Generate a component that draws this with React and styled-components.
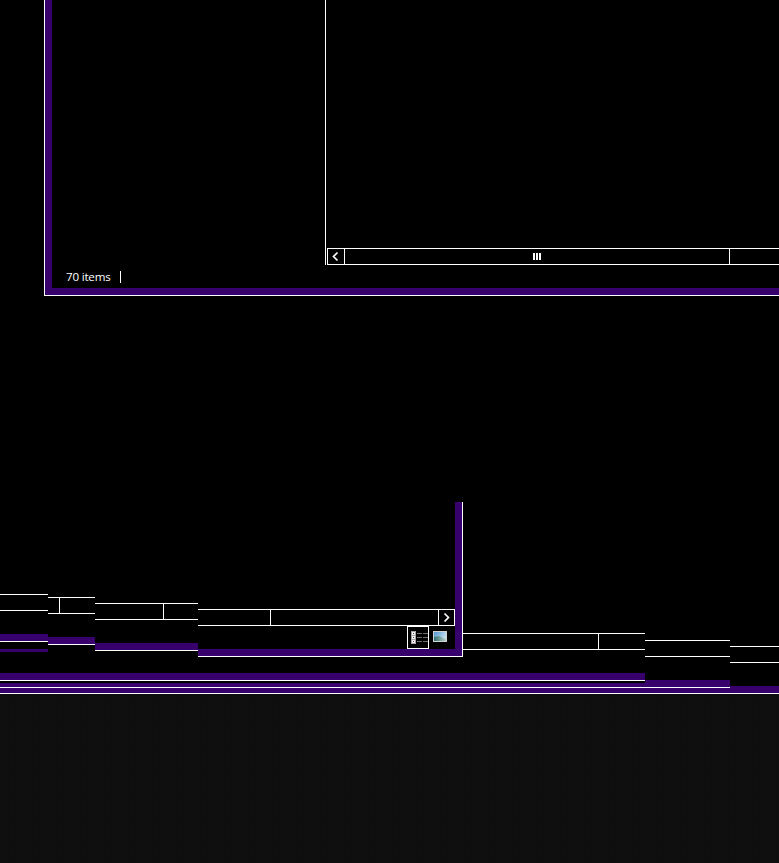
import styled, { createGlobalStyle } from "styled-components";

const purple = "#37006c";

const GlobalStyle = createGlobalStyle`
  html, body {
    margin: 0;
    padding: 0;
    background: #000;
  }
  body {
    font-family: "Open Sans", "Liberation Sans", sans-serif;
    color: #fff;
  }
`;

const Page = styled.div`
  width: 779px;
  height: 863px;
  overflow: hidden;
  display: flex;
  flex-direction: column;
  background: #000;
`;

//Top explorer window
const Window = styled.div`
  height: 296px;
  flex: none;
  margin-left: 44px;
  border-left: 1px solid #fff;
  border-bottom: 1px solid #fff;
  box-sizing: border-box;
`;

const WindowFrame = styled.div`
  height: 100%;
  box-sizing: border-box;
  border-left: 7px solid ${purple};
  border-bottom: 7px solid ${purple};
  display: flex;
  flex-direction: column;
`;

const Panes = styled.div`
  height: 265px;
  flex: none;
  display: flex;
`;

const NavPane = styled.div`
  width: 273px;
  flex: none;
`;

const ContentPane = styled.div`
  flex: 1;
  min-width: 0;
  border-left: 1px solid #fff;
  padding-left: 1px;
  display: flex;
  flex-direction: column;
  justify-content: flex-end;
`;

const StatusBar = styled.div`
  flex: 1;
  display: flex;
  align-items: center;
  padding-left: 14px;
`;

const ItemCount = styled.span`
  font-size: 11.6px;
  letter-spacing: -0.2px;
  line-height: 16px;
  width: 54px;
`;

const StatusDivider = styled.span`
  width: 1px;
  height: 12px;
  background: #fff;
`;

//Scroll bars
const Track = styled.div`
  height: 17px;
  box-sizing: border-box;
  flex: none;
  display: flex;
  border-top: 1px solid #fff;
  border-bottom: 1px solid #fff;
`;

const TrackCell = styled.div`
  width: ${(p) => p.$width}px;
  flex: none;
  box-sizing: border-box;
  border-right: 1px solid #fff;
`;

const Thumb = styled(TrackCell)`
  display: flex;
  align-items: center;
  justify-content: center;
  gap: 1px;
`;

const GripBar = styled.span`
  width: 2px;
  height: 7px;
  background: #fff;
`;

const TrackFill = styled.div`
  flex: 1;
`;

const ArrowButton = styled.div`
  width: ${(p) => p.$width}px;
  flex: none;
  box-sizing: border-box;
  border-left: 1px solid #fff;
  border-right: 1px solid #fff;
  display: flex;
  align-items: center;
  justify-content: center;
`;

//Torn lower part of the screen
const Stage = styled.div`
  height: 398px;
  flex: none;
  display: flex;
`;

const Column = styled.div`
  width: ${(p) => p.$width}px;
  flex: none;
  display: flex;
  flex-direction: column;
  padding-top: ${(p) => p.$top}px;
  box-sizing: border-box;
`;

const Edge = styled.div`
  height: ${(p) => p.$size}px;
  flex: none;
  box-sizing: border-box;
  margin-top: ${(p) => p.$gap || 0}px;
  background: ${purple};
  border-bottom: ${(p) => (p.$open ? "none" : "1px solid #fff")};
`;

const Bands = styled.div`
  margin-top: auto;
`;

const DockedPanel = styled.div`
  height: 155px;
  flex: none;
  box-sizing: border-box;
  border-right: 1px solid #fff;
  border-bottom: 1px solid #fff;
`;

const DockedFrame = styled.div`
  height: 100%;
  box-sizing: border-box;
  border-right: 7px solid ${purple};
  border-bottom: 7px solid ${purple};
  padding-top: 107px;
  display: flex;
  flex-direction: column;
`;

const ViewBar = styled.div`
  display: flex;
  justify-content: flex-end;
  padding-right: 4px;
`;

const ViewButton = styled.div`
  width: 22px;
  height: 23px;
  box-sizing: border-box;
  border: 1px solid ${(p) => (p.$active ? "#fff" : "transparent")};
  display: flex;
`;

const Footer = styled.div`
  flex: 1;
  background-color: #0d0d0d;
  background-image: repeating-conic-gradient(#101010 0% 25%, transparent 0% 50%);
  background-size: 3px 3px;
`;

const Chevron = ({ left }) => (
  <svg width="8" height="11" viewBox="0 0 8 11">
    <polyline
      points={left ? "5.5,1.5 1.5,5.5 5.5,9.5" : "1.5,1.5 5.5,5.5 1.5,9.5"}
      fill="none"
      stroke="#fff"
      strokeWidth="1.7"
    />
  </svg>
);

const DetailsIcon = () => (
  <svg width="20" height="21" viewBox="0 0 20 21">
    <rect x="3" y="4" width="5" height="13" fill="#a8a8a8" />
    <rect x="4" y="5" width="3" height="3" fill="#f2f2f2" />
    <rect x="5" y="6" width="1" height="1" fill="#555" />
    <rect x="4" y="9" width="3" height="3" fill="#f2f2f2" />
    <rect x="5" y="10" width="1" height="1" fill="#4a6a50" />
    <rect x="4" y="13" width="3" height="3" fill="#f2f2f2" />
    <rect x="5" y="14" width="1" height="1" fill="#a04040" />
    {[6, 10, 14].map((y) => (
      <g key={y} fill="#6f6f6f">
        <rect x="9" y={y} width="5" height="1" />
        <rect x="15" y={y} width="5" height="1" />
      </g>
    ))}
  </svg>
);

const ImageIcon = () => (
  <svg width="20" height="21" viewBox="0 0 20 21">
    <defs>
      <linearGradient id="sky" x1="0" y1="0" x2="1" y2="0.6">
        <stop offset="0" stopColor="#4f97d0" />
        <stop offset="1" stopColor="#cfe4f2" />
      </linearGradient>
      <linearGradient id="ground" x1="0" y1="0" x2="1" y2="0">
        <stop offset="0" stopColor="#2f6f70" />
        <stop offset="1" stopColor="#b9d2cc" />
      </linearGradient>
    </defs>
    <rect x="3" y="4" width="14" height="11" fill="#d2d2d2" />
    <rect x="4" y="5" width="12" height="9" fill="url(#sky)" />
    <path d="M4 10 L9 9 L16 12 V14 H4 Z" fill="url(#ground)" />
  </svg>
);

function LowerBands() {
  return (
    <Bands>
      <Edge $size={8} />
      <Edge $size={5} $gap={2} />
      <Edge $size={6} />
    </Bands>
  );
}

function App() {
  return (
    <Page>
      <GlobalStyle />
      <Window>
        <WindowFrame>
          <Panes>
            <NavPane />
            <ContentPane>
              <Track>
                <ArrowButton $width={18}>
                  <Chevron left />
                </ArrowButton>
                <Thumb $width={385}>
                  <GripBar />
                  <GripBar />
                  <GripBar />
                </Thumb>
                <TrackFill />
              </Track>
            </ContentPane>
          </Panes>
          <StatusBar>
            <ItemCount>70 items</ItemCount>
            <StatusDivider />
          </StatusBar>
        </WindowFrame>
      </Window>

      <Stage>
        <Column $width={48} $top={298}>
          <Track />
          <Edge $size={8} $gap={23} />
          <Edge $size={3} $gap={7} $open />
          <LowerBands />
        </Column>
        <Column $width={47} $top={301}>
          <Track>
            <TrackCell $width={12} />
          </Track>
          <Edge $size={8} $gap={23} />
          <LowerBands />
        </Column>
        <Column $width={103} $top={307}>
          <Track>
            <TrackCell $width={69} />
          </Track>
          <Edge $size={8} $gap={23} />
          <LowerBands />
        </Column>
        <Column $width={265} $top={206}>
          <DockedPanel>
            <DockedFrame>
              <Track>
                <TrackCell $width={73} />
                <TrackFill />
                <ArrowButton $width={17}>
                  <Chevron />
                </ArrowButton>
              </Track>
              <ViewBar>
                <ViewButton $active>
                  <DetailsIcon />
                </ViewButton>
                <ViewButton>
                  <ImageIcon />
                </ViewButton>
              </ViewBar>
            </DockedFrame>
          </DockedPanel>
          <LowerBands />
        </Column>
        <Column $width={182} $top={337}>
          <Track>
            <TrackCell $width={136} />
          </Track>
          <LowerBands />
        </Column>
        <Column $width={85} $top={344}>
          <Track />
          <Bands>
            <Edge $size={8} />
            <Edge $size={6} />
          </Bands>
        </Column>
        <Column $width={49} $top={350}>
          <Track />
          <Bands>
            <Edge $size={8} />
          </Bands>
        </Column>
      </Stage>
      <Footer />
    </Page>
  );
}

export default App;
